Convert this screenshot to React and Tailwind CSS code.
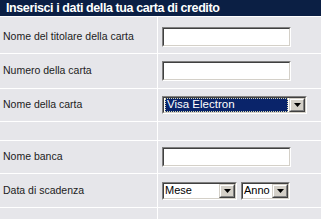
import React from "react";

const font = { fontFamily: '"Liberation Sans", Arial, sans-serif' };

const Sunken = ({ className, children }) => (
    <div className={`border border-t-[#808080] border-l-[#808080] border-b-white border-r-white ${className}`}>
        <div className="h-full flex border border-t-[#404040] border-l-[#404040] border-b-[#d4d0c8] border-r-[#d4d0c8] bg-white">
            {children}
        </div>
    </div>
);

const DropButton = () => (
    <div className="w-[16px] h-full border border-t-[#d4d0c8] border-l-[#d4d0c8] border-b-[#404040] border-r-[#404040]">
        <div className="h-full flex items-center justify-center bg-[#d4d0c8] border border-t-white border-l-white border-b-[#808080] border-r-[#808080]">
            <svg width="7" height="4" viewBox="0 0 7 4">
                <path d="M0 0h7L3.5 4z" fill="#000" />
            </svg>
        </div>
    </div>
);

const TextInput = () => <Sunken className="w-[129px] h-[20px]" />;

const Select = ({ width, value, active }) => (
    <Sunken className={`${width} h-[18px]`}>
        <div className="flex-1 flex items-center min-w-0">
            {active ? (
                <div className="mx-[1px] flex-1 h-[14px] flex items-center border border-dotted border-[#d8d8b0] bg-[#0a246a] text-white text-[11.5px] leading-none pl-[1px]">
                    {value}
                </div>
            ) : (
                <div className="pl-[1px] text-[11px] leading-none text-black whitespace-nowrap">{value}</div>
            )}
        </div>
        <DropButton />
    </Sunken>
);

const Row = ({ h, label, children, pad = "" }) => (
    <div className={`flex border-b border-white ${h}`}>
        <div className={`w-[158px] border-r border-white flex items-center pl-[3px] text-[10.5px] text-[#1c1c1c] ${pad}`}>
            {label}
        </div>
        <div className={`flex-1 flex items-center gap-[4px] pl-[4px] ${pad}`}>
            {children}
        </div>
    </div>
);

export default function App() {
    return (
        <div className="w-[321px] h-[219px] overflow-hidden bg-[#e6e6ea]" style={font}>
            <div className="h-[17px] border-b border-white bg-[#0b1f44] text-white font-bold text-[12.5px] tracking-[-0.4px] leading-none flex items-center pl-[6px]">
                Inserisci i dati della tua carta di credito
            </div>
            <Row h="h-[37px]" pad="pt-[4px]" label="Nome del titolare della carta">
                <TextInput />
            </Row>
            <Row h="h-[35px]" label="Numero della carta">
                <TextInput />
            </Row>
            <Row h="h-[33px]" label="Nome della carta">
                <Select width="w-[145px]" value="Visa Electron" active />
            </Row>
            <Row h="h-[19px]" label="" />
            <Row h="h-[33px]" label="Nome banca">
                <TextInput />
            </Row>
            <Row h="h-[34px]" label="Data di scadenza">
                <Select width="w-[75px]" value="Mese" />
                <Select width="w-[49px]" value="Anno" />
            </Row>
            <Row h="h-[12px]" label="" />
        </div>
    );
}
